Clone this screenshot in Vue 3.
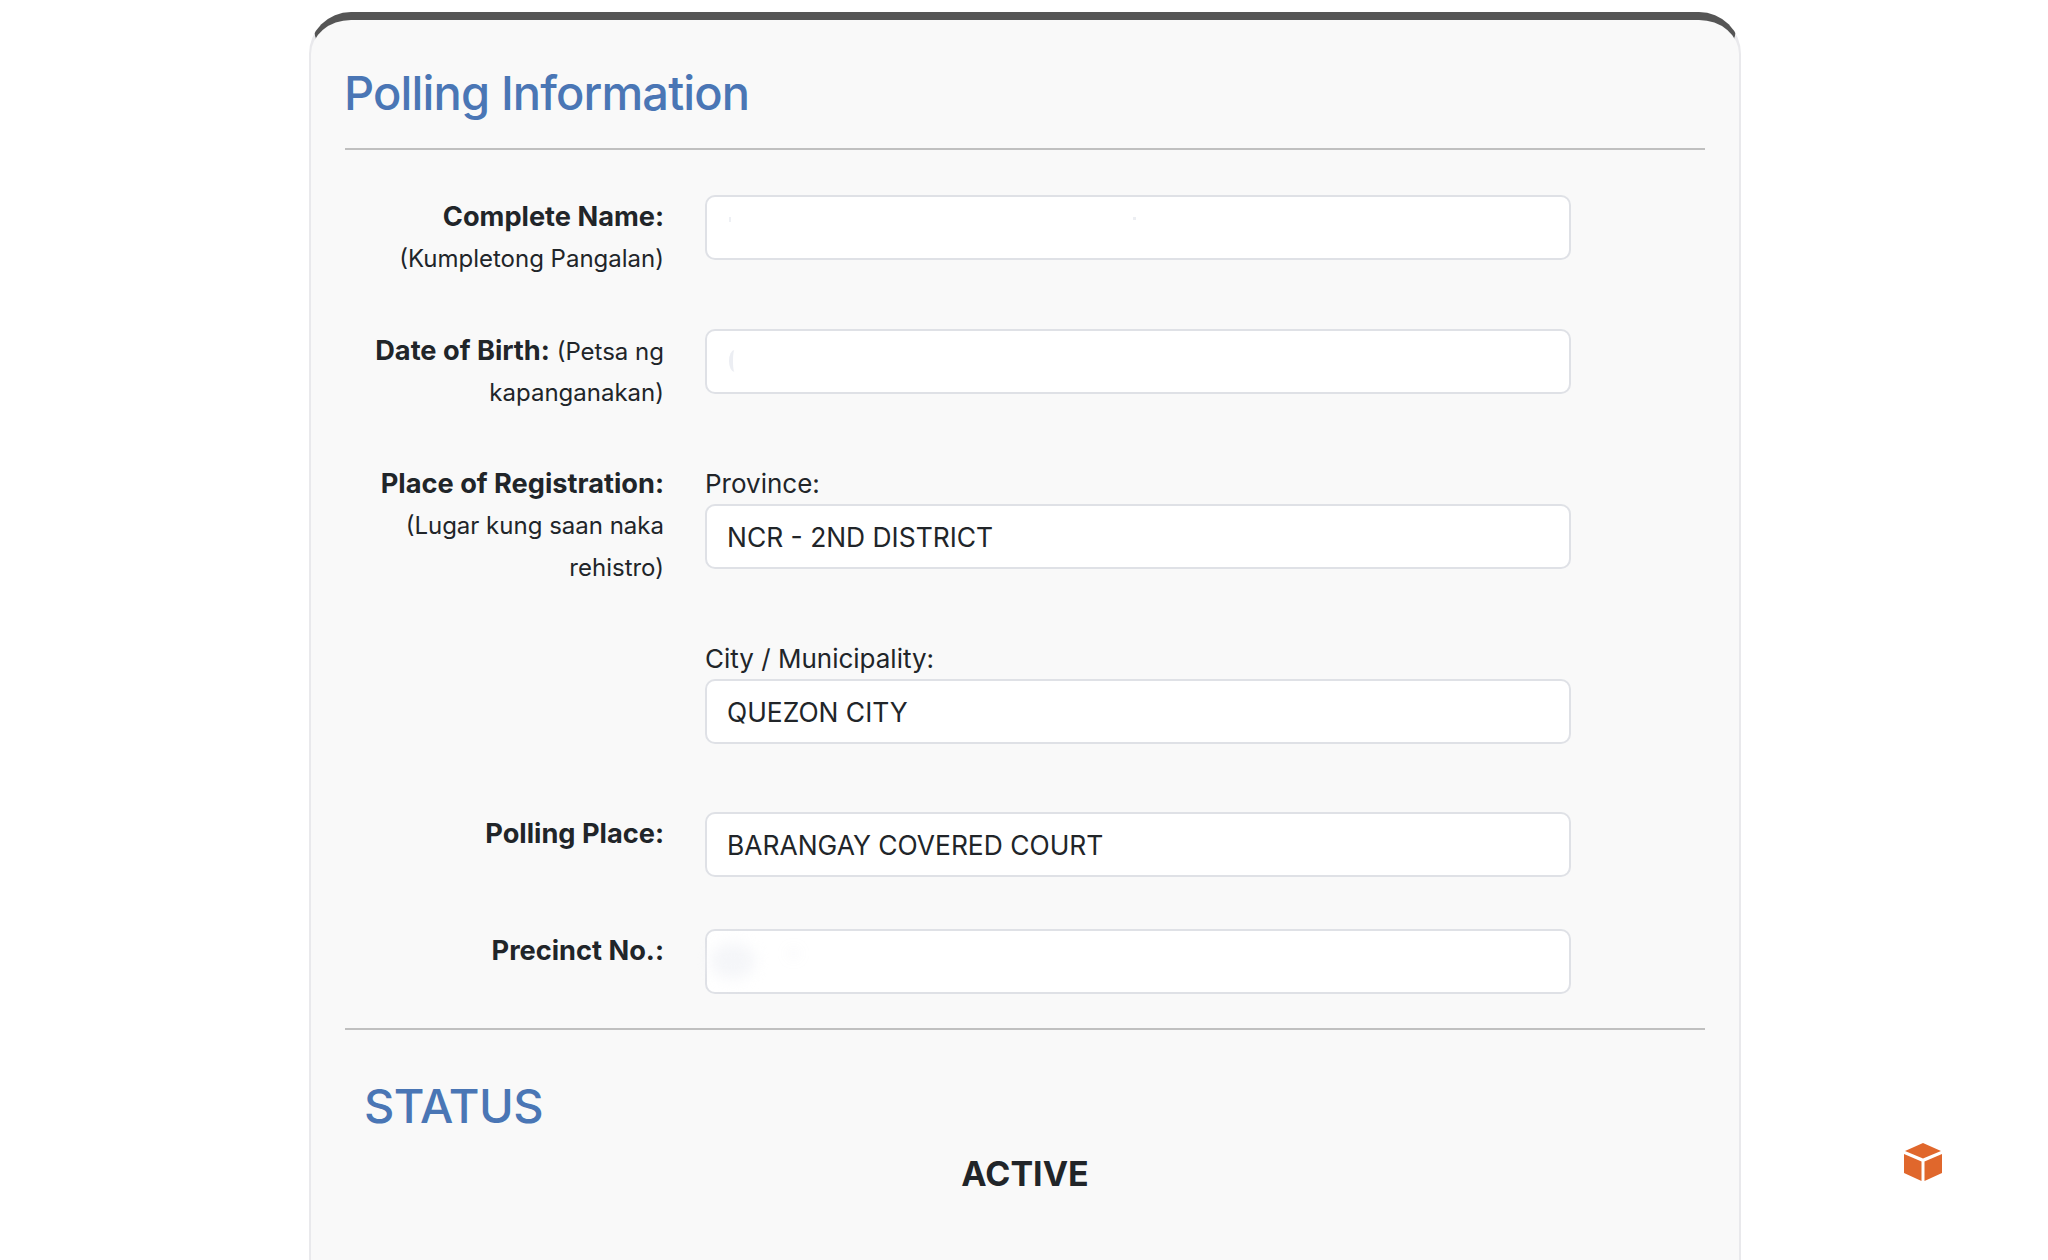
<script setup>
const rows = [
  { id: 'name', bold: 'Complete Name:', sub: '(Kumpletong Pangalan)', fields: [{ value: '', mark: 'dot' }] },
  { id: 'dob', bold: 'Date of Birth:', sub: ' (Petsa ng kapanganakan)', inline: true, fields: [{ value: '', mark: 'paren' }] },
  { id: 'place', bold: 'Place of Registration:', sub: '(Lugar kung saan naka rehistro)', fields: [
    { label: 'Province:', value: 'NCR - 2ND DISTRICT' },
    { label: 'City / Municipality:', value: 'QUEZON CITY' }
  ] },
  { id: 'poll', bold: 'Polling Place:', fields: [{ value: 'BARANGAY COVERED COURT' }] },
  { id: 'prec', bold: 'Precinct No.:', fields: [{ value: '', mark: 'blur' }] }
]
</script>

<template>
  <div class="page">
    <main class="card">
      <h1 class="title">Polling Information</h1>
      <hr class="rule rule-top" />
      <section v-for="row in rows" :key="row.id" class="row" :class="'row-' + row.id">
        <div class="label">
          <strong :class="{ 'strong-block': !row.inline }">{{ row.bold }}</strong>
          <template v-if="row.sub">
            <span v-if="row.inline" class="sub-inline">{{ row.sub }}</span>
            <span v-else class="sub">{{ row.sub }}</span>
          </template>
        </div>
        <div class="fields">
          <div v-for="(f, i) in row.fields" :key="i" class="field">
            <div v-if="f.label" class="field-label">{{ f.label }}</div>
            <div class="input">
              {{ f.value }}
              <i v-if="f.mark" class="mark" :class="'mark-' + f.mark"></i>
            </div>
          </div>
        </div>
      </section>
      <hr class="rule rule-bottom" />
      <h2 class="status">STATUS</h2>
      <p class="active">ACTIVE</p>
    </main>
    <svg class="cube" viewBox="0 0 40 40" aria-hidden="true">
      <path d="M20 1 L38 9 L20 16.5 L2 9 Z" fill="#e0672c" />
      <path d="M1 12 L18.5 19.5 L18.5 39 L1 31 Z" fill="#e0672c" />
      <path d="M39 12 L21.5 19.5 L21.5 39 L39 31 Z" fill="#e0672c" />
    </svg>
  </div>
</template>

<style>
html, body { margin: 0; background: #fff; overflow: hidden; }
</style>

<style scoped>
.page {
  position: relative;
  height: 1260px;
  overflow: hidden;
  padding-top: 12px;
  box-sizing: border-box;
  font-family: Inter, "Liberation Sans", sans-serif;
  color: #212529;
  font-size: 26px;
  line-height: 42px;
}
.card {
  width: 1432px;
  height: 1300px;
  margin-left: 309px;
  box-sizing: border-box;
  padding: 0 34px;
  background: #f9f9f9;
  border: 2px solid #e9e9ec;
  border-top: 8px solid #555;
  border-radius: 42px;
}
.title {
  margin: 0 0 0 -1px;
  padding-top: 45px;
  font-size: 47px;
  line-height: 56px;
  font-weight: 500;
  color: #4a76b5;
  letter-spacing: -0.85px;
}
.rule { margin: 0; border: 0; height: 2px; background: #c0c0c0; }
.rule-top { margin-top: 27px; }
.rule-bottom { margin-top: 34px; }
.row {
  display: grid;
  grid-template-columns: 319px 866px;
  column-gap: 41px;
}
.row-name { margin-top: 45px; height: 134px; }
.row-dob { height: 134px; }
.row-poll { margin-top: 68px; }
.row-prec { margin-top: 52px; }
.label { text-align: right; padding-top: 1px; }
.row-place .label { padding-top: 0; }
.row-dob .label { line-height: 41px; }
.label strong { font-weight: 700; font-size: 27.2px; line-height: 1; }
.label .strong-block { display: block; line-height: 42px; }
.label .sub { display: block; font-size: 24px; }
.sub-inline { font-size: 24px; line-height: 1; }
.field + .field { margin-top: 69px; }
.field-label { height: 42px; margin-bottom: -1px; }
.input {
  position: relative;
  box-sizing: border-box;
  height: 65px;
  padding: 0 20px;
  background: #fff;
  border: 2px solid #dfe1e6;
  border-radius: 10px;
  font-size: 26.4px;
  line-height: 62px;
  white-space: nowrap;
}
.mark { position: absolute; display: block; }
.mark-dot { left: 22px; top: 20px; width: 2px; height: 5px; background: #eef0f4; }
.mark-dot::after { content: ""; position: absolute; left: 404px; top: 0; width: 3px; height: 3px; background: #eceef2; }
.mark-paren { left: 22px; top: 19px; width: 11px; height: 22px; border-left: 4px solid #eceef3; border-radius: 50%; box-sizing: border-box; }
.mark-blur { left: 3px; top: 12px; width: 46px; height: 36px; background: #f5f6f9; border-radius: 50%; filter: blur(7px); }
.mark-blur::after { content: ""; position: absolute; left: 82px; top: 9px; width: 3px; height: 3px; background: #b9bcc4; }
.status {
  margin: 48px 0 0 19px;
  font-size: 47px;
  line-height: 56px;
  font-weight: 500;
  color: #4a76b5;
  letter-spacing: -0.5px;
}
.active {
  margin: 18px 0 0;
  text-align: center;
  font-size: 34px;
  line-height: 44px;
  font-weight: 700;
}
.cube {
  position: absolute;
  left: 1903px;
  top: 1142px;
  width: 40px;
  height: 40px;
}
</style>
